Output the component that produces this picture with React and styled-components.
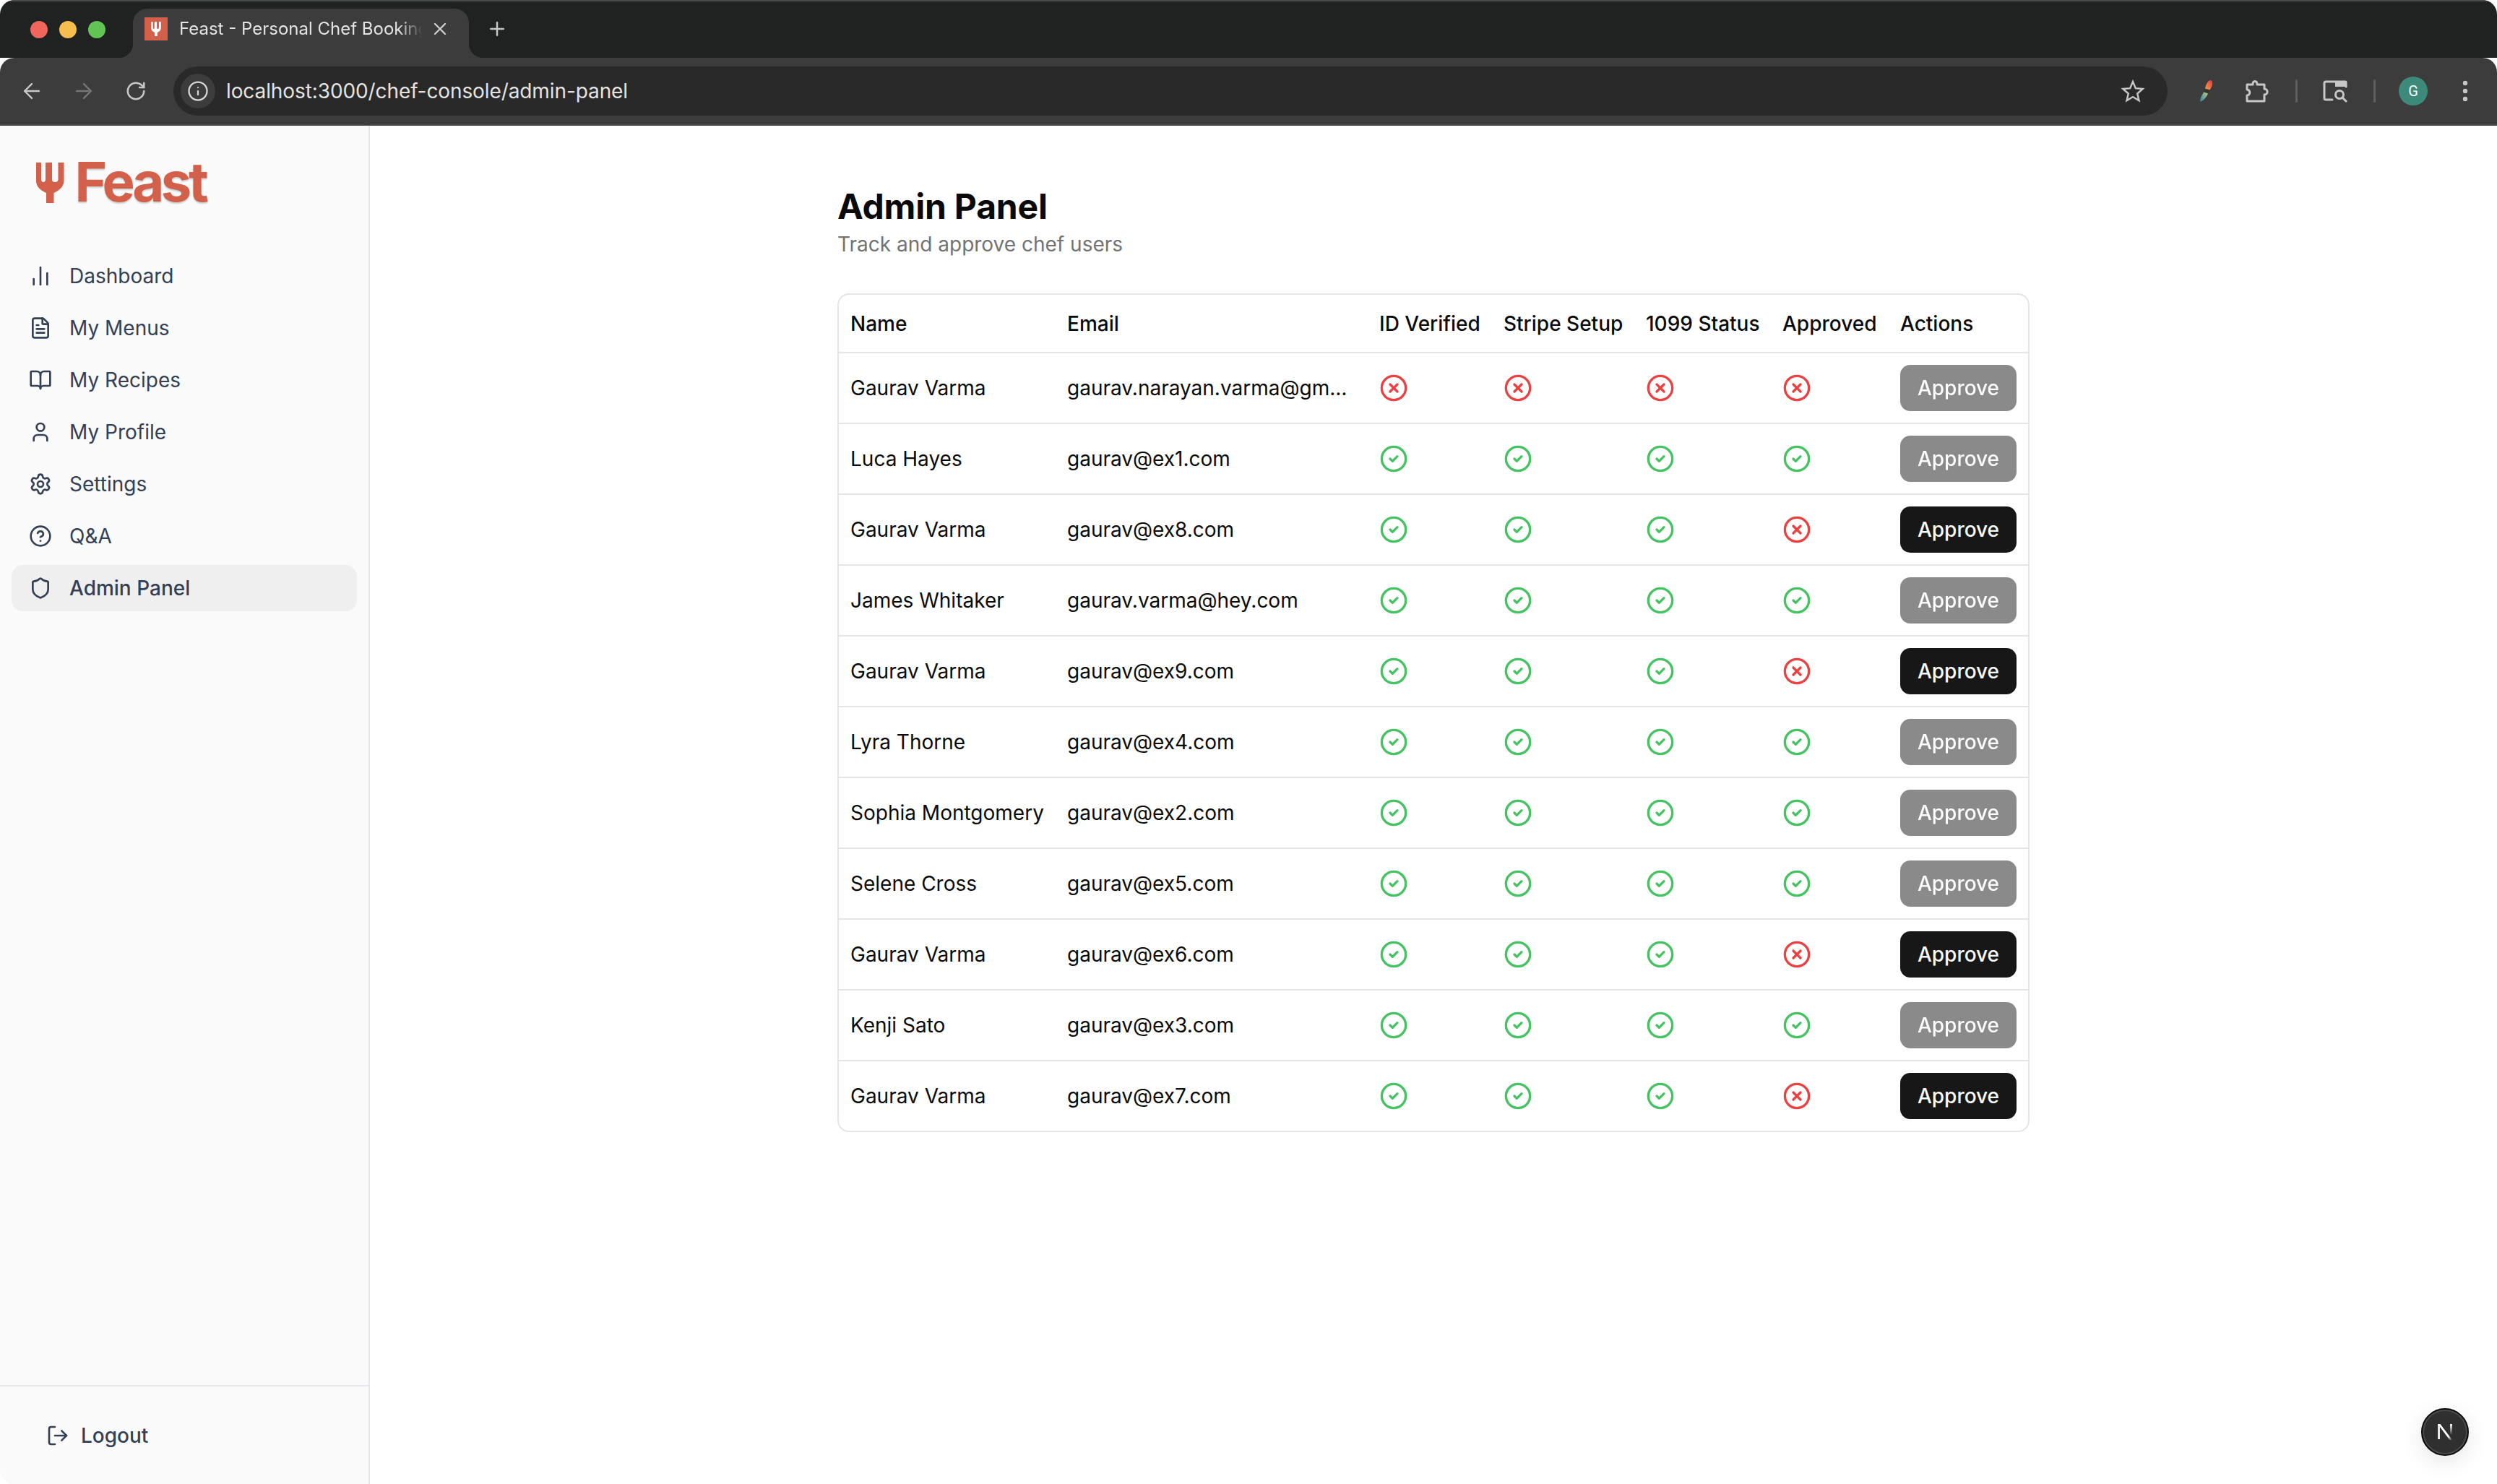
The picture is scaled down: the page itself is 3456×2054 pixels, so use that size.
import React from "react";
import styled, { createGlobalStyle, css } from "styled-components";
import {
  ArrowLeft, ArrowRight, RotateCw, Info, X, Plus,
  ChartNoAxesColumn, FileText, BookOpen, User, Settings, CircleHelp, Shield, LogOut,
  CircleCheck, CircleX,
} from "lucide-react";

const Global = createGlobalStyle`
  html, body { margin: 0; padding: 0; background: #fff; }
  body { font-family: Inter, "Liberation Sans", sans-serif; }
  * { box-sizing: border-box; }
`;

const Window = styled.div`
  width: 3456px; height: 2054px; display: flex; flex-direction: column;
  border-radius: 20px; overflow: hidden; background: #fff; position: relative;
`;

/* ---------- browser chrome ---------- */
const TabStrip = styled.div`
  height: 80px; flex: none; background: #202221; display: flex; align-items: flex-end;
  box-shadow: inset 0 2px 0 #4a4a4a;
`;
const Lights = styled.div`
  display: flex; gap: 16px; align-self: flex-start; padding: 29px 0 0 42px; width: 184px; flex: none;
`;
const Light = styled.span`
  width: 24px; height: 24px; border-radius: 50%; background: ${p => p.$c};
`;
const Tab = styled.div`
  position: relative; width: 465px; height: 68px; background: #3c3c3c; flex: none;
  border-radius: 20px 20px 0 0; display: flex; align-items: flex-start; padding: 12px 20px 0 16px; gap: 16px;
  color: #e3e3e3;
  &::before, &::after { content: ""; position: absolute; bottom: 0; width: 20px; height: 20px; }
  &::before { left: -20px; background: radial-gradient(circle at 0 0, transparent 20px, #3c3c3c 20.5px); }
  &::after { right: -20px; background: radial-gradient(circle at 100% 0, transparent 20px, #3c3c3c 20.5px); }
`;
const Favicon = styled.span`
  width: 32px; height: 32px; background: #d2604a; flex: none; display: flex; align-items: center; justify-content: center;
`;
const TabTitle = styled.span`
  width: 337px; flex: none; white-space: nowrap; overflow: hidden; font-size: 24px; line-height: 32px; font-weight: 400;
  -webkit-mask-image: linear-gradient(90deg, #000 90%, transparent);
  mask-image: linear-gradient(90deg, #000 90%, transparent);
`;
const TabClose = styled.span`
  display: flex; margin-left: -6px; color: #d0d0d0; padding-top: 2px;
`;
const NewTab = styled.span`
  display: flex; align-self: flex-start; padding: 25px 0 0 24px; color: #c7c7c7;
`;
const Toolbar = styled.div`
  height: 94px; flex: none; background: #3c3c3c; display: flex; align-items: center; padding: 0 8px;
  border-radius: 20px 20px 0 0; position: relative;
  border-bottom: 2px solid #454545;
`;
const NavButton = styled.span`
  width: 72px; height: 72px; flex: none; display: flex; align-items: center; justify-content: center;
  color: ${p => (p.$dim ? "#757575" : "#c7c7c7")};
`;
const Omnibox = styled.div`
  flex: 1; height: 68px; margin: 0 16px; border-radius: 34px; background: #292929;
  display: flex; align-items: center; padding: 0 31px 0 10px;
`;
const InfoChip = styled.span`
  width: 48px; height: 48px; border-radius: 50%; background: #3c3c3c; color: #d8d8d8;
  display: flex; align-items: center; justify-content: center; flex: none;
`;
const Url = styled.span`
  flex: 1; margin-left: 15px; font-family: Inter, sans-serif; font-size: 28px; color: #e3e3e3; letter-spacing: -0.1px;
`;
const Slot = styled.span`
  width: ${p => p.$w || 72}px; flex: none; display: flex; align-items: center; justify-content: center;
`;
const ToolDivider = styled.span`
  width: 3px; height: 32px; border-radius: 2px; background: #5e5e5e; display: block;
`;
const Avatar = styled.span`
  width: 40px; height: 40px; border-radius: 50%; background: #3d8a7a; color: #fff; font: 400 20px Roboto, sans-serif;
  display: flex; align-items: center; justify-content: center;
`;

/* ---------- page ---------- */
const Page = styled.div`
  flex: 1; min-height: 0; display: flex; background: #fff;
`;
const Sidebar = styled.aside`
  width: 512px; flex: none; background: #fafafa; border-right: 2px solid #e8e8ec; display: flex; flex-direction: column;
`;
const LogoArea = styled.div`
  height: 176px; flex: none; display: flex; align-items: flex-start; padding: 50px 0 0 50px; gap: 11px;
`;
const LogoText = styled.span`
  font-family: Inter, sans-serif; font-weight: 700; font-size: 76px; line-height: 60px; letter-spacing: -4.4px;
  color: #d2604a; text-shadow: 0 2px 2px rgba(0,0,0,.18); margin: -3px 0 0 4px;
`;
const Nav = styled.nav`
  flex: 1; display: flex; flex-direction: column; gap: 8px; padding: 0 16px;
`;
const NavItem = styled.a`
  height: 64px; display: flex; align-items: center; gap: 24px; padding: 0 24px; border-radius: 16px;
  color: #344054; font-size: 28px; font-weight: ${p => (p.$active ? 500 : 400)};
  background: ${p => (p.$active ? "#f0eff0" : "transparent")};
  svg { flex: none; }
`;
const SideFooter = styled.div`
  height: 137px; flex: none; border-top: 2px solid #e8e8ec; display: flex; align-items: center; gap: 16px;
  padding: 0 0 0 64px; color: #344054; font-size: 28px; font-weight: 500;
`;
const Main = styled.main`
  flex: 1; min-width: 0; padding-top: 80px;
`;
const Content = styled.div`
  width: 1650px; margin: 0 auto;
`;
const Title = styled.h1`
  margin: 0; font-size: 48px; line-height: 64px; font-weight: 700; color: #0a0a0a; letter-spacing: -0.2px;
`;
const Subtitle = styled.p`
  margin: 0 0 48px; font-size: 28px; line-height: 40px; color: #737373;
`;
const Card = styled.div`
  border: 2px solid #e5e5e5; border-radius: 16px; overflow: hidden; background: #fff;
`;
const Table = styled.table`
  width: 1646px; table-layout: fixed; border-collapse: separate; border-spacing: 0; color: #0a0a0a; font-size: 28px;
`;
const Th = styled.th`
  height: 81px; padding: 0 16px; text-align: left; font-weight: 500; border-bottom: 2px solid #e5e5e5; white-space: nowrap;
`;
const Td = styled.td`
  padding: 16px; vertical-align: middle; border-bottom: 2px solid #e5e5e5; height: 98px;
  tr:last-child > & { border-bottom: 0; height: 96px; }
  svg { display: block; }
`;
const Email = styled.span`
  display: block; max-width: 400px; overflow: hidden; text-overflow: ellipsis; white-space: nowrap;
`;
const ApproveButton = styled.button`
  width: 161px; height: 64px; border: 0; border-radius: 14px; background: #171717; color: #fafafa; display: block;
  font-family: inherit; font-size: 28px; font-weight: 500; padding: 0;
  ${p => p.disabled && css`opacity: .5;`}
`;
const DevBadge = styled.div`
  position: absolute; left: 3351px; top: 1949px; width: 66px; height: 66px; border-radius: 50%;
  background: #2f2f2f; border: 2px solid #0d0d0d; box-shadow: inset 0 0 0 2px #4a4a4a, 0 8px 30px rgba(0,0,0,.1);
  display: flex; align-items: center; justify-content: center;
`;

const Fork = ({ w, h, c }) => (
  <svg width={w} height={h} viewBox="0 0 38.5 57" style={{ flex: "none", display: "block" }}>
    <path fill={c} d="M0 1H7V24C7 27 8.5 28 10 28C11.5 28 13 27 13 24V1H22V24C22 27 23.5 28 26 28C28.5 28 30.5 27 30.5 24V1H38.5V26C38.5 35 31 40 24.5 43V57H14V43C7 40 0 35 0 26Z" />
  </svg>
);

const Star = () => (
  <svg width="34" height="34" viewBox="0 0 24 24" fill="none" stroke="#c7c7c7" strokeWidth="1.7" strokeLinejoin="miter">
    <polygon points="12,2.8 14.7,9.3 21.7,9.9 16.4,14.5 18,21.3 12,17.7 6,21.3 7.6,14.5 2.3,9.9 9.3,9.3" />
  </svg>
);

const Brush = () => (
  <svg width="24" height="32" viewBox="0 0 24 32">
    <defs>
      <linearGradient id="bh" x1="1" y1="0" x2="0" y2="1">
        <stop offset="0" stopColor="#e53946" />
        <stop offset="1" stopColor="#f3a040" />
      </linearGradient>
      <linearGradient id="bt" x1="1" y1="0" x2="0" y2="1">
        <stop offset="0" stopColor="#bcd27a" />
        <stop offset="1" stopColor="#2c7fa8" />
      </linearGradient>
    </defs>
    <path fill="url(#bh)" d="M19 1C23.5 2 23 8 18.5 14.5L12 12.5C13 7 15.5 2 19 1Z" />
    <path fill="#33332f" d="M11.7 13.5L18 15.5L16.7 18.5L10.5 16.5Z" />
    <path fill="url(#bt)" d="M10.3 17.5L16 19.4C13.5 25 9 30 5.5 31C4 29 7 22 10.3 17.5Z" />
  </svg>
);

const PuzzleIcon = () => (
  <svg width="34" height="34" viewBox="0 0 34 34" fill="none" stroke="#c7c7c7" strokeWidth="3" strokeLinejoin="round">
    <path d="M3 8H11C11 2 17 2 17 8H27V14C32.5 14 32.5 22 27 22V31H3V23C8 23 8 15 3 15Z" />
  </svg>
);

const TabSearch = () => (
  <svg width="36" height="34" viewBox="0 0 36 34" fill="none" stroke="#c7c7c7" strokeWidth="3" strokeLinecap="round">
    <path d="M14 29H5a2 2 0 0 1-2-2V6a2 2 0 0 1 2-2h27a1 1 0 0 1 1 1v6" />
    <path d="M18 4h15v7H18z" fill="#c7c7c7" stroke="none" />
    <circle cx="24" cy="22" r="5.5" />
    <path d="M28 26l5 5" />
  </svg>
);

const Dots = () => (
  <svg width="8" height="30" viewBox="0 0 8 30" fill="#c7c7c7">
    <circle cx="4" cy="4" r="3.2" /><circle cx="4" cy="15" r="3.2" /><circle cx="4" cy="26" r="3.2" />
  </svg>
);

const NextMark = () => (
  <svg width="24" height="26" viewBox="0 0 24 26" fill="none">
    <defs>
      <linearGradient id="n1" x1="0" y1="0" x2="1" y2="1">
        <stop offset="0" stopColor="#fff" /><stop offset=".75" stopColor="#fff" /><stop offset="1" stopColor="#fff" stopOpacity="0" />
      </linearGradient>
      <linearGradient id="n2" x1="0" y1="0" x2="0" y2="1">
        <stop offset="0" stopColor="#fff" /><stop offset="1" stopColor="#fff" stopOpacity="0" />
      </linearGradient>
    </defs>
    <rect x="2" y="2" width="3" height="21" fill="#e8e8e8" />
    <path d="M2 2H5.5L22 24H18.5Z" fill="url(#n1)" />
    <rect x="19" y="2" width="3" height="15" fill="url(#n2)" />
  </svg>
);

const navItems = [
  { label: "Dashboard", Icon: ChartNoAxesColumn },
  { label: "My Menus", Icon: FileText },
  { label: "My Recipes", Icon: BookOpen },
  { label: "My Profile", Icon: User },
  { label: "Settings", Icon: Settings },
  { label: "Q&A", Icon: CircleHelp },
  { label: "Admin Panel", Icon: Shield, active: true },
];

const rows = [
  ["Gaurav Varma", "gaurav.narayan.varma@gmail.com", 0, 0, 0, 0, true],
  ["Luca Hayes", "gaurav@ex1.com", 1, 1, 1, 1, true],
  ["Gaurav Varma", "gaurav@ex8.com", 1, 1, 1, 0, false],
  ["James Whitaker", "gaurav.varma@hey.com", 1, 1, 1, 1, true],
  ["Gaurav Varma", "gaurav@ex9.com", 1, 1, 1, 0, false],
  ["Lyra Thorne", "gaurav@ex4.com", 1, 1, 1, 1, true],
  ["Sophia Montgomery", "gaurav@ex2.com", 1, 1, 1, 1, true],
  ["Selene Cross", "gaurav@ex5.com", 1, 1, 1, 1, true],
  ["Gaurav Varma", "gaurav@ex6.com", 1, 1, 1, 0, false],
  ["Kenji Sato", "gaurav@ex3.com", 1, 1, 1, 1, true],
  ["Gaurav Varma", "gaurav@ex7.com", 1, 1, 1, 0, false],
];

const colWidths = [300, 432, 172, 197, 189, 163, 193];
const heads = ["Name", "Email", "ID Verified", "Stripe Setup", "1099 Status", "Approved", "Actions"];

const Status = ({ ok }) =>
  ok ? <CircleCheck size={40} color="#45c261" /> : <CircleX size={40} color="#ea4242" />;

export default function App() {
  return (
    <>
      <Global />
      <Window>
        <TabStrip>
          <Lights>
            <Light $c="#f1665c" /><Light $c="#f6be4f" /><Light $c="#61c554" />
          </Lights>
          <Tab>
            <Favicon><Fork w={14} h={20} c="#fff" /></Favicon>
            <TabTitle>Feast - Personal Chef Booking Platform</TabTitle>
            <TabClose><X size={28} strokeWidth={2} /></TabClose>
          </Tab>
          <NewTab><Plus size={30} strokeWidth={2} /></NewTab>
        </TabStrip>
        <Toolbar>
          <NavButton><ArrowLeft size={34} strokeWidth={1.7} /></NavButton>
          <NavButton $dim><ArrowRight size={34} strokeWidth={1.7} /></NavButton>
          <NavButton><RotateCw size={30} strokeWidth={2} /></NavButton>
          <Omnibox>
            <InfoChip><Info size={30} strokeWidth={1.8} /></InfoChip>
            <Url>localhost:3000/chef-console/admin-panel</Url>
            <Star />
          </Omnibox>
          <Slot><Brush /></Slot>
          <Slot><PuzzleIcon /></Slot>
          <Slot $w={36}><ToolDivider /></Slot>
          <Slot><TabSearch /></Slot>
          <Slot $w={36}><ToolDivider /></Slot>
          <Slot><Avatar>G</Avatar></Slot>
          <Slot><Dots /></Slot>
        </Toolbar>
        <Page>
          <Sidebar>
            <LogoArea>
              <Fork w={38.5} h={57} c="#d2604a" />
              <LogoText>Feast</LogoText>
            </LogoArea>
            <Nav>
              {navItems.map(({ label, Icon, active }) => (
                <NavItem key={label} $active={active}>
                  <Icon size={32} strokeWidth={2} />
                  {label}
                </NavItem>
              ))}
            </Nav>
            <SideFooter>
              <LogOut size={32} strokeWidth={2} />
              Logout
            </SideFooter>
          </Sidebar>
          <Main>
            <Content>
              <Title>Admin Panel</Title>
              <Subtitle>Track and approve chef users</Subtitle>
              <Card>
                <Table>
                  <colgroup>
                    {colWidths.map((w, i) => <col key={i} width={w} />)}
                  </colgroup>
                  <thead>
                    <tr>{heads.map(h => <Th key={h}>{h}</Th>)}</tr>
                  </thead>
                  <tbody>
                    {rows.map((r, i) => (
                      <tr key={i}>
                        <Td>{r[0]}</Td>
                        <Td><Email>{r[1]}</Email></Td>
                        <Td><Status ok={r[2]} /></Td>
                        <Td><Status ok={r[3]} /></Td>
                        <Td><Status ok={r[4]} /></Td>
                        <Td><Status ok={r[5]} /></Td>
                        <Td><ApproveButton disabled={r[6]}>Approve</ApproveButton></Td>
                      </tr>
                    ))}
                  </tbody>
                </Table>
              </Card>
            </Content>
          </Main>
        </Page>
        <DevBadge><NextMark /></DevBadge>
      </Window>
    </>
  );
}
